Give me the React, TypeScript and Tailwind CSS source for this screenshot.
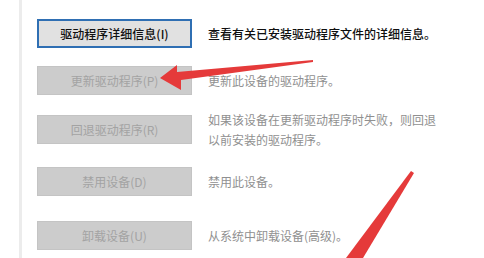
import React from "react";

const rows = [
  { label: "驱动程序详细信息(I)", desc: ["查看有关已安装驱动程序文件的详细信息。"], active: true, mt: "mt-[19px]" },
  { label: "更新驱动程序(P)", desc: ["更新此设备的驱动程序。"], active: false, mt: "mt-[18px]" },
  { label: "回退驱动程序(R)", desc: ["如果该设备在更新驱动程序时失败，则回退", "以前安装的驱动程序。"], active: false, mt: "mt-[20px]" },
  { label: "禁用设备(D)", desc: ["禁用此设备。"], active: false, mt: "mt-[23px]" },
  { label: "卸载设备(U)", desc: ["从系统中卸载设备(高级)。"], active: false, mt: "mt-[25px]" },
];

export default function App() {
  return (
    <div
      className="relative w-[484px] h-[258px] overflow-hidden bg-white flex text-[12px]"
      style={{ fontFamily: '"Noto Sans CJK SC", "Noto Sans", sans-serif' }}
    >
      {/* left divider */}
      <div className="ml-[19px] w-[3px] h-full bg-[#ececec]" />

      <div className="ml-[15px] flex flex-col">
        {rows.map((r) => (
          <div key={r.label} className={`${r.mt} h-[29px] flex items-center`}>
            <div
              className={
                r.active
                  ? "w-[155px] h-full flex items-center justify-center border-2 border-[#2f6fb3] bg-[#e1e1e1] text-[#111111] font-medium"
                  : "w-[155px] h-full flex items-center justify-center border border-[#c4c4c4] bg-[#cccccc] text-[#a3a3a3]"
              }
            >
              {r.label}
            </div>
            <div
              className={
                r.active
                  ? "ml-[16px] leading-[20px] whitespace-nowrap text-[#0f0f0f] font-medium"
                  : "ml-[16px] leading-[20px] whitespace-nowrap text-[#909090]"
              }
            >
              {r.desc.map((d) => (
                <div key={d}>{d}</div>
              ))}
            </div>
          </div>
        ))}
      </div>

      {/* red annotation arrows */}
      <svg className="absolute left-0 top-0" width="484" height="258" viewBox="0 0 484 258">
        <polygon
          points="160,78 177,65 177,72 313,60 313,62 181,80 181,90"
          fill="#e53a3a"
        />
        <polygon points="411,171 414,173 363,258 346,258" fill="#e53a3a" />
      </svg>
    </div>
  );
}
